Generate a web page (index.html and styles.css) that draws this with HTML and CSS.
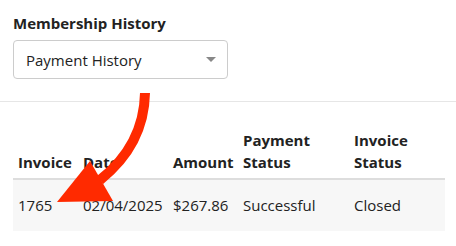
FILE: index.html
```html
<!DOCTYPE html>
<html lang="en">
<head>
  <meta charset="UTF-8" />
  <meta name="viewport" content="width=device-width, initial-scale=1.0"/>
  <title>Membership History</title>
  <link rel="stylesheet" href="styles.css">
</head>
<body>
  <h2 class="title">Membership History</h2>

  <!-- Pilihan riwayat -->
  <div class="select-box">
    <span>Payment History</span>
    <span class="caret"></span>
  </div>

  <hr class="divider" />

  <!-- Tabel pembayaran -->
  <table class="history-table">
    <colgroup>
      <col style="width: 65px" />
      <col style="width: 90px" />
      <col style="width: 70px" />
      <col style="width: 111px" />
      <col style="width: 96px" />
    </colgroup>
    <thead>
      <tr>
        <th>Invoice</th>
        <th>Date</th>
        <th>Amount</th>
        <th>Payment<br />Status</th>
        <th>Invoice<br />Status</th>
      </tr>
    </thead>
    <tbody>
      <tr>
        <td>1765</td>
        <td>02/04/2025</td>
        <td>$267.86</td>
        <td>Successful</td>
        <td>Closed</td>
      </tr>
    </tbody>
  </table>

  <!-- Panah penanda -->
  <svg class="arrow" width="456" height="246" viewBox="0 0 456 246">
    <path d="M145,93 Q144,145 100,180" fill="none" stroke="#ff2a00" stroke-width="10" />
    <polygon points="57,202 90,161 113,201" fill="#ff2a00" />
  </svg>
</body>
</html>
```

FILE: styles.css
```css
body {
  font-family: 'Open Sans', sans-serif;
  font-size: 15px;
  color: #222;
  background-color: #fff;
  margin: 0;
  padding: 13px;
  position: relative;
}
.title {
  font-size: 15px;
  font-weight: 700;
  line-height: 20px;
  margin: 0;
}
.select-box {
  display: flex;
  align-items: center;
  justify-content: space-between;
  width: 215px;
  height: 39px;
  box-sizing: border-box;
  margin-top: 7px;
  padding: 0 11px 0 12px;
  border: 1px solid #ccc;
  border-radius: 4px;
  line-height: 22px;
}
.caret {
  width: 0;
  height: 0;
  border-left: 5px solid transparent;
  border-right: 5px solid transparent;
  border-top: 5px solid #888;
}
.divider {
  border: none;
  border-top: 1px solid #e6e6e6;
  margin: 22px -13px 0;
}
.history-table {
  table-layout: fixed;
  width: 432px;
  border-collapse: collapse;
  margin-top: 19px;
  line-height: 22px;
}
th {
  font-weight: 700;
  text-align: left;
  vertical-align: bottom;
  padding: 8px 5px 5px;
  border-bottom: 2px solid #ddd;
}
td {
  text-align: left;
  padding: 14px 5px 15px;
  background-color: #f7f7f7;
  white-space: nowrap;
}
.arrow {
  position: absolute;
  top: 0;
  left: 0;
  pointer-events: none;
}
```
